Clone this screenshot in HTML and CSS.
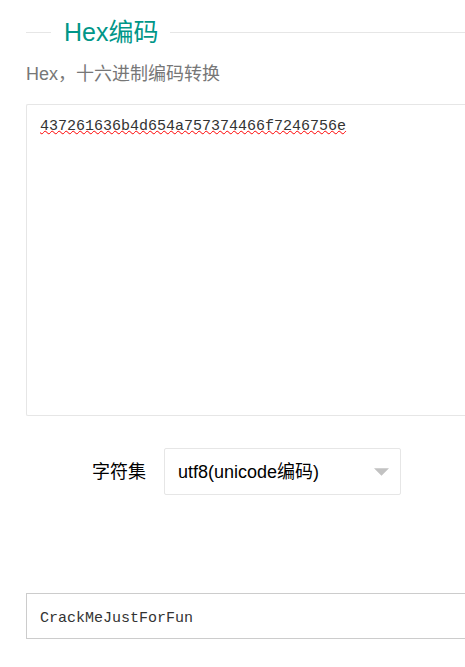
FILE: index.html
```
<!DOCTYPE html>
<html lang="zh-CN">
<head>
<meta charset="utf-8">
<title>Hex编码</title>
<link rel="stylesheet" href="styles.css">
</head>
<body>
<main class="page">
  <h1 class="title"><span class="title-text">Hex编码</span></h1>
  <p class="intro">Hex，十六进制编码转换</p>
  <textarea class="box source" aria-label="Hex" spellcheck="false">437261636b4d654a757374466f7246756e</textarea>
  <div class="row">
    <label class="label" for="charset">字符集</label>
    <div class="select-wrap">
      <select class="select" id="charset">
        <option>utf8(unicode编码)</option>
      </select>
      <svg class="arrow" viewBox="0 0 16 8" aria-hidden="true"><path d="M0 0H16L8 8Z"/></svg>
    </div>
  </div>
  <textarea class="box result" aria-label="Result" rows="1" spellcheck="false">CrackMeJustForFun</textarea>
</main>
</body>
</html>
```
FILE: styles.css
```
* {
  box-sizing: border-box;
}

body {
  margin: 0;
  background: #fff;
  color: #000;
  font: 18px/24px "Liberation Sans", "Noto Sans CJK SC", sans-serif;
  overflow-x: hidden;
}

.page {
  padding: 15px 0 0 26px;
}

.title {
  display: flex;
  align-items: center;
  margin: 0;
  color: #009688;
  font-size: 25px;
  font-weight: 400;
  line-height: 34px;
}

.title::before,
.title::after {
  content: "";
  width: 25px;
  height: 1px;
  background: #e6e6e6;
}

.title::after {
  flex: 1;
}

.title-text {
  padding: 0 12px 0 13px;
}

.intro {
  margin: 13px 0 18px;
  color: #777;
}

.box {
  display: block;
  width: 100%;
  margin: 0;
  padding: 10px 13px;
  border: 1px solid #e6e6e6;
  border-right: 0;
  border-radius: 2px 0 0 2px;
  outline: 0;
  background: #fff;
  color: #333;
  font: 15px/24px "Liberation Mono", monospace;
  resize: none;
  overflow: hidden;
}

.source {
  height: 312px;
  text-decoration: underline wavy #f00 1px;
  text-underline-offset: 0;
  text-decoration-skip-ink: none;
}

.row {
  display: flex;
  align-items: center;
  margin: 32px 0 98px;
}

.label {
  width: 138px;
  padding-right: 18px;
  text-align: right;
}

.select-wrap {
  position: relative;
  width: 237px;
}

.select {
  display: block;
  width: 100%;
  height: 47px;
  padding: 0 32px 0 13px;
  border: 1px solid #e6e6e6;
  border-radius: 2px;
  background: #fff;
  color: #000;
  font: inherit;
  appearance: none;
}

.arrow {
  position: absolute;
  top: 20px;
  right: 12px;
  width: 15px;
  height: 8px;
  fill: #c2c2c2;
  pointer-events: none;
}

.result {
  height: 46px;
  padding-top: 13px;
  border-color: #ccc;
  border-radius: 0;
}
```
